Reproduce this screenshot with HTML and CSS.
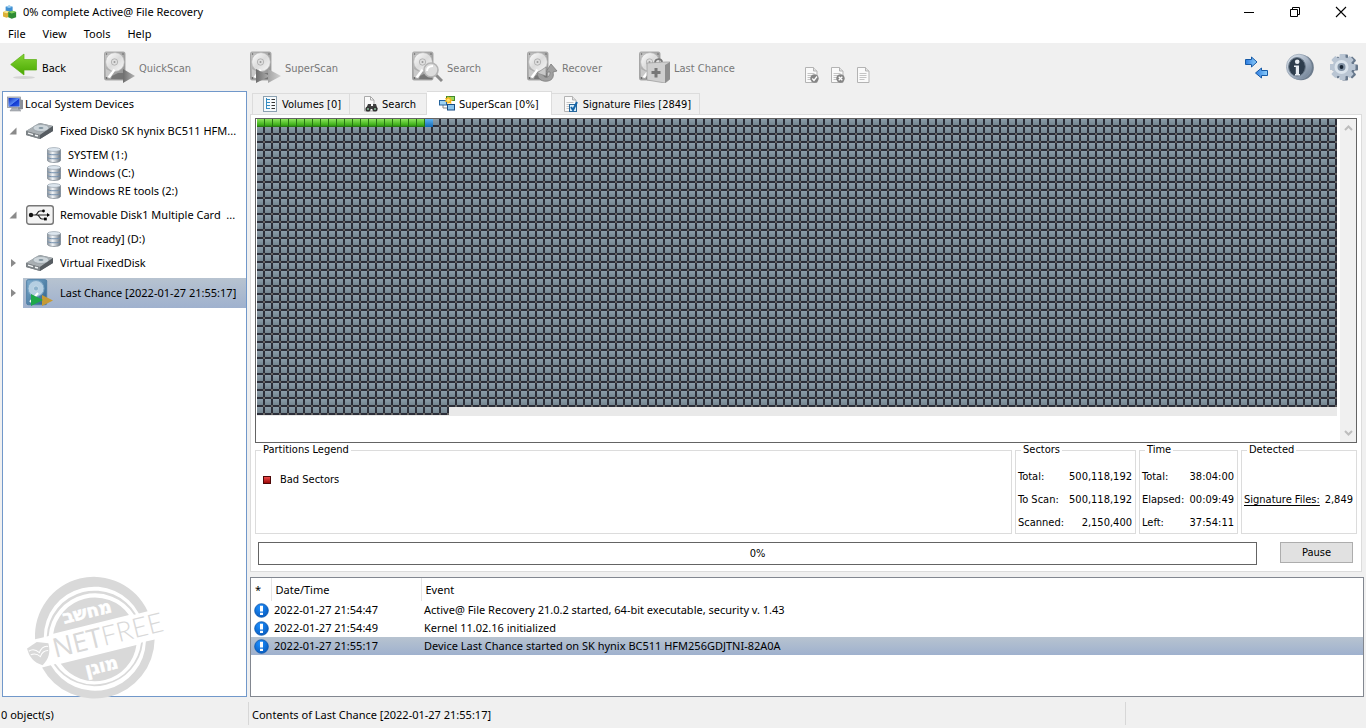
FILE: index.html
```html
<!DOCTYPE html>
<html lang="en">
<head>
<meta charset="utf-8">
<meta name="viewport" content="width=device-width, initial-scale=1">
<title>0% complete Active@ File Recovery</title>
<link rel="stylesheet" href="styles.css">
</head>
<body>
<svg class="defs" width="0" height="0" aria-hidden="true">
  <defs>
    <linearGradient id="gCase" x1="0" y1="0" x2="1" y2="1"><stop offset="0" stop-color="#c4c4c4"/><stop offset="1" stop-color="#8e8e8e"/></linearGradient>
    <linearGradient id="gPlate" x1="0" y1="0" x2="1" y2="1"><stop offset="0" stop-color="#ffffff"/><stop offset=".5" stop-color="#dcdcdc"/><stop offset="1" stop-color="#f8f8f8"/></linearGradient>
    <linearGradient id="gPlay" x1="0" y1="0" x2="1" y2="0"><stop offset="0" stop-color="#6e6e6e"/><stop offset="1" stop-color="#b4b4b4"/></linearGradient>
    <linearGradient id="gPlay2" x1="0" y1="0" x2="1" y2="0"><stop offset="0" stop-color="#a4a4a4"/><stop offset="1" stop-color="#d2d2d2"/></linearGradient>
    <linearGradient id="gBack" x1="0" y1="0" x2="0" y2="1"><stop offset="0" stop-color="#84d434"/><stop offset="1" stop-color="#48a800"/></linearGradient>
    <linearGradient id="gCyl" x1="0" y1="0" x2="1" y2="0"><stop offset="0" stop-color="#8a939c"/><stop offset=".4" stop-color="#f4f7fa"/><stop offset="1" stop-color="#69747f"/></linearGradient>
    <linearGradient id="gScreen" x1="0" y1="0" x2="1" y2="1"><stop offset="0" stop-color="#0b2cc0"/><stop offset=".5" stop-color="#5688f4"/><stop offset=".55" stop-color="#1238d0"/><stop offset="1" stop-color="#2c62ea"/></linearGradient>
    <linearGradient id="gArrow" x1="0" y1="0" x2="1" y2="0"><stop offset="0" stop-color="#2c7be0"/><stop offset="1" stop-color="#8fd0fb"/></linearGradient>
    <linearGradient id="gSteel" x1="0" y1="0" x2="1" y2="1"><stop offset="0" stop-color="#e4ebf3"/><stop offset=".5" stop-color="#a9b6c6"/><stop offset="1" stop-color="#63758a"/></linearGradient>
    <radialGradient id="gInfo" cx=".4" cy=".3" r=".8"><stop offset="0" stop-color="#1e90ff"/><stop offset="1" stop-color="#0656b8"/></radialGradient>
    <linearGradient id="gBlueCase" x1="0" y1="0" x2="1" y2="1"><stop offset="0" stop-color="#7faed0"/><stop offset="1" stop-color="#2d5f88"/></linearGradient>
    <symbol id="hdd" viewBox="0 0 32 32">
      <rect x="1.500" y="1" width="20.500" height="28" rx="1.500" fill="url(#gCase)" stroke="#9a9a9a" stroke-width=".8"/>
      <circle cx="12" cy="11" r="9.400" fill="url(#gPlate)" stroke="#adadad" stroke-width=".6"/>
      <circle cx="11.500" cy="11" r="3.200" fill="#dedede" stroke="#aaa" stroke-width=".8"/><circle cx="11.500" cy="11" r="1" fill="#999"/>
      <path d="M3 18l6 3-2 6H3z" fill="#c9c9c9"/><path d="M4.500 26l6-8 2 1.300L7 27z" fill="#fff"/>
      <path d="M9 25l6-3 6 0v6H8z" fill="#6a6a6a" opacity=".75"/>
      <g fill="#666"><circle cx="3.500" cy="3" r=".8"/><circle cx="20" cy="3" r=".8"/><circle cx="3.500" cy="27" r=".9"/></g>
    </symbol>
    <symbol id="drive" viewBox="0 0 28 18">
      <path d="M0 9L14 1l13 3v5L14 17 0 13z" fill="#777d82"/><path d="M0 9L13 1l14 3-13 9z" fill="#a9afb3"/>
      <ellipse cx="15" cy="6" rx="8" ry="3.500" fill="#cdd5da" stroke="#8e989f" stroke-width=".6"/><ellipse cx="15" cy="6" rx="2.500" ry="1.100" fill="#8295a0"/>
      <path d="M0 9l14 4v4L0 13z" fill="#7c8286"/><path d="M2 11.200l5 1.400M9 13.200l3 .8" stroke="#f4f6f7" stroke-width="1.400"/><path d="M14 13l13-9v5l-13 8z" fill="#565c61"/>
    </symbol>
    <symbol id="volume" viewBox="0 0 16 16">
      <path d="M1.500 2.500v11c0 1 3 2 6.500 2s6.500-1 6.500-2v-11z" fill="url(#gCyl)" stroke="#7a848e" stroke-width=".7"/>
      <ellipse cx="8" cy="2.500" rx="6.500" ry="1.900" fill="#dde6ee" stroke="#96a2ad" stroke-width=".7"/>
      <path d="M1.500 6.500c1 1.700 12 1.700 13 0M1.500 10.500c1 1.700 12 1.700 13 0" fill="none" stroke="#7591ae" stroke-width="1"/>
    </symbol>
    <symbol id="page" viewBox="0 0 14 16"><path d="M1.500.5h8l3.500 3.500v11.500h-11.500z" fill="#fafafa" stroke="#b3b3b3"/><path d="M9.500.5V4H13" fill="#e2e2e2" stroke="#b3b3b3"/><path d="M3.500 6.500h7M3.500 8.500h7M3.500 10.500h7M3.500 12.500h5" stroke="#c4c4c4"/></symbol>
    <symbol id="alert" viewBox="0 0 16 16"><circle cx="8" cy="8" r="7.300" fill="url(#gInfo)" stroke="#0a55ad" stroke-width=".8"/><path d="M6.400 3h3.200v6H6.400zM6.400 10.400h3.200v2.400H6.400z" fill="#fff"/></symbol>
    <g id="cog">
      <circle cx="12.500" cy="14" r="10"/>
      <rect x="9.500" y="1" width="6" height="26" rx="1"/><rect x="9.500" y="1" width="6" height="26" rx="1" transform="rotate(45 12.500 14)"/><rect x="9.500" y="1" width="6" height="26" rx="1" transform="rotate(90 12.500 14)"/><rect x="9.500" y="1" width="6" height="26" rx="1" transform="rotate(135 12.500 14)"/>
    </g>
  </defs>
</svg>

<header class="titlebar">
  <svg class="app-icon" viewBox="0 0 16 16"><path d="M3 2l4-1.500 4 1.500v5l-4 1.500L3 7z" fill="#3f8fd2"/><path d="M3 2l4-1.500L11 2 7 3.500z" fill="#9fd0f2"/><path d="M0 8l4-1.500L8 8v5l-4 1.500L0 13z" fill="#ddb238"/><path d="M0 8l4-1.500L8 8 4 9.500z" fill="#f9e793"/><path d="M6 8l5-1.500L15 8v6l-5 1.800L6 14z" fill="#2f8b34"/><path d="M6 8l5-1.500L15 8l-5 1.800z" fill="#83d15c"/></svg>
  <h1>0% complete Active@ File Recovery</h1>
  <div class="window-buttons">
    <button type="button" aria-label="Minimize"><svg viewBox="0 0 12 12"><path d="M1 6.500h10" stroke="#000"/></svg></button>
    <button type="button" aria-label="Restore"><svg viewBox="0 0 12 12"><path d="M1.500 3.500h7v7h-7zM3.500 3.500v-2h7v7h-2" fill="none" stroke="#000"/></svg></button>
    <button type="button" aria-label="Close"><svg viewBox="0 0 12 12"><path d="M1 1l10 10M11 1L1 11" stroke="#000" stroke-width="1.100"/></svg></button>
  </div>
</header>
<nav class="menubar"><button type="button">File</button><button type="button">View</button><button type="button">Tools</button><button type="button">Help</button></nav>

<div class="toolbar">
  <div class="commands">
    <button type="button" class="back"><svg viewBox="0 0 28 28"><ellipse cx="14" cy="24.500" rx="11" ry="1.500" fill="#d5d5d5"/><path d="M.7 11.500L14 1v5.500h12.500v10.500H14v5z" fill="url(#gBack)" stroke="#59ad12" stroke-width=".7"/></svg><span>Back</span></button>
    <button type="button" disabled><svg viewBox="0 0 32 32"><use href="#hdd"/><path d="M20 18l12 7-12 7z" fill="url(#gPlay)"/></svg><span>QuickScan</span></button>
    <button type="button" disabled><svg viewBox="0 0 32 32"><use href="#hdd"/><path d="M7 18l14 7-14 7z" fill="url(#gPlay)"/><path d="M19 18l13 7-13 7z" fill="url(#gPlay2)"/></svg><span>SuperScan</span></button>
    <button type="button" disabled><svg viewBox="0 0 32 32"><use href="#hdd"/><path d="M25 24l6 6" stroke="#8a8a8a" stroke-width="3"/><circle cx="20" cy="19" r="7" fill="#dcdcdc" stroke="#b4b4b4" stroke-width="1.600"/><path d="M16 20c0-4 3-5 6-5" fill="none" stroke="#fff" stroke-width="2"/></svg><span>Search</span></button>
    <button type="button" disabled><svg viewBox="0 0 32 32"><use href="#hdd"/><path d="M11 22c1 7 6 9 11 8 5-1 6-5 5-9l4-1-6-7-5 8 4 0c0 4-2 6-5 5-2-1-3-3-1-5z" fill="#a0a0a0" stroke="#7b7b7b" stroke-width=".8"/><path d="M11 22l9-6v9z" fill="#c9c9c9" stroke="#8b8b8b" stroke-width=".7"/></svg><span>Recover</span></button>
    <button type="button" disabled><svg viewBox="0 0 32 32"><use href="#hdd"/><path d="M17 12c0-5 7-5 7-1" fill="none" stroke="#777" stroke-width="1.800"/><path d="M9 12l19-1 4 0v17l-5 4-18-3z" fill="#cfcfcf" stroke="#9a9a9a" stroke-width=".7"/><path d="M27 14l5-3v17l-5 4z" fill="#8e8e8e"/><path d="M16.500 17h3v3h3v3h-3v3.500h-3v-3.500h-3v-3h3z" fill="#777"/></svg><span>Last Chance</span></button>
  </div>
  <div class="page-tools">
    <button type="button" disabled aria-label="Check files"><svg viewBox="0 0 16 16"><use href="#page" width="14" height="16"/><circle cx="10.500" cy="11.500" r="4.200" fill="#858585"/><path d="M8.300 11.500l1.700 2 3-4" fill="none" stroke="#fff" stroke-width="1.300"/></svg></button>
    <button type="button" disabled aria-label="Uncheck files"><svg viewBox="0 0 16 16"><use href="#page" width="14" height="16"/><circle cx="10.500" cy="11.500" r="4.200" fill="#858585"/><path d="M8.700 9.700l3.600 3.600M12.300 9.700l-3.600 3.600" stroke="#fff" stroke-width="1.300"/></svg></button>
    <button type="button" disabled aria-label="File details"><svg viewBox="0 0 16 16"><use href="#page" width="14" height="16"/></svg></button>
  </div>
  <div class="app-tools">
    <button type="button" aria-label="Toggle panes"><svg viewBox="0 0 28 28"><path d="M3.500 6.500h6V4l5.500 5-5.500 5V11.500h-6z" fill="url(#gArrow)" stroke="#175aa6"/><path d="M25.500 17.500h-6V15l-6 5 6 5v-2.500h6z" fill="url(#gArrow)" stroke="#175aa6"/></svg></button>
    <button type="button" aria-label="About"><svg viewBox="0 0 28 28"><circle cx="15" cy="14.500" r="12.800" fill="#6d7c8d"/><circle cx="13" cy="13.800" r="12.600" fill="url(#gSteel)" stroke="#8c9aab" stroke-width=".6"/><ellipse cx="11" cy="13.800" rx="8.400" ry="9.300" fill="#2e3d4d" stroke="#6c7b8b"/><circle cx="11.200" cy="8.800" r="2.300" fill="#e8edf3"/><path d="M8 12.500h5v8.500h1v1.500H9V21h.8v-7H8z" fill="#e8edf3"/></svg></button>
    <button type="button" aria-label="Settings"><svg viewBox="0 0 28 28"><g transform="translate(2.500 .5)" fill="#66778b"><use href="#cog"/></g><g fill="#b9c5d3"><use href="#cog"/></g><circle cx="11.500" cy="14" r="7" fill="#dbe4ed"/><circle cx="11.500" cy="14" r="4" fill="#7f90a3"/><circle cx="11.500" cy="14" r="1.900" fill="#172534"/></svg></button>
  </div>
</div>

<main class="workspace">
  <aside class="devices">
    <div class="root-row"><svg viewBox="0 0 16 16"><path d="M11 3l5 1v9l-5 1z" fill="#8a8f98"/><rect x=".5" y="1" width="13" height="10.500" fill="#c6cad0" stroke="#858990" stroke-width=".7"/><rect x="1.500" y="2" width="11" height="8.500" fill="url(#gScreen)"/><path d="M5 12h5l4 3H3z" fill="#aeb2b8" stroke="#858990" stroke-width=".5"/></svg>Local System Devices</div>
    <ul class="tree">
      <li class="disk"><svg class="twisty" viewBox="0 0 8 8"><path d="M7.500.5v7h-7z" fill="#8a8a8a"/></svg><span class="entry"><svg class="disk-icon" viewBox="0 0 28 18"><use href="#drive"/></svg><span class="name">Fixed Disk0 SK hynix BC511 HFM...</span></span></li>
      <li class="volume"><svg viewBox="0 0 16 16"><use href="#volume"/></svg>SYSTEM (1:)</li>
      <li class="volume"><svg viewBox="0 0 16 16"><use href="#volume"/></svg>Windows (C:)</li>
      <li class="volume"><svg viewBox="0 0 16 16"><use href="#volume"/></svg>Windows RE tools (2:)</li>
      <li class="disk"><svg class="twisty" viewBox="0 0 8 8"><path d="M7.500.5v7h-7z" fill="#8a8a8a"/></svg><span class="entry"><svg class="disk-icon" viewBox="0 0 28 20"><rect x=".7" y=".7" width="26.600" height="18.600" rx="2.500" fill="#f3f3f3" stroke="#777" stroke-width="1.400"/><path d="M5 10h17M9 10c3 0 2-4 5-4h3M11 10c3 0 2 4 5 4h3" fill="none" stroke="#222" stroke-width="1.200"/><circle cx="5" cy="10" r="2.200" fill="#111"/><path d="M21 8l3 2-3 2z"/><circle cx="17.500" cy="6" r="1.400"/><path d="M18 12.600h2.800v2.800H18z"/></svg><span class="name">Removable Disk1 Multiple Card &nbsp;...</span></span></li>
      <li class="volume"><svg viewBox="0 0 16 16"><use href="#volume"/></svg>[not ready] (D:)</li>
      <li class="disk"><svg class="twisty" viewBox="0 0 8 8"><path d="M2 0l5 4-5 4z" fill="#8a8a8a"/></svg><span class="entry"><svg class="disk-icon" viewBox="0 0 28 18"><use href="#drive"/></svg><span class="name">Virtual FixedDisk</span></span></li>
      <li class="disk"><svg class="twisty" viewBox="0 0 8 8"><path d="M2 0l5 4-5 4z" fill="#8a8a8a"/></svg><span class="entry selected"><svg class="scan-icon" viewBox="0 0 28 28"><rect x=".7" y=".7" width="20" height="25" rx="1.500" fill="url(#gBlueCase)" stroke="#4d7ea5"/><circle cx="10" cy="9.500" r="8" fill="#b5cfe2" stroke="#7ba6c6"/><circle cx="10" cy="9.500" r="2.500" fill="#8db2cc" stroke="#d5e5ef" stroke-width=".6"/><path d="M4 23l8-9" stroke="#fff" stroke-width="2"/><path d="M16 16l11 5.500L16 27z" fill="#c59a35"/><path d="M5 15l12 6-12 6z" fill="#1fa84a"/></svg><span class="name">Last Chance [2022-01-27 21:55:17]</span></span></li>
    </ul>
    <svg class="watermark" viewBox="0 0 144 120" role="img" aria-label="NetFree">
      <g transform="rotate(-14 70 60)" fill="#d9d9d9">
        <path d="M12 49A59 59 0 0 1 128 49L119 49A50.500 50.500 0 0 0 21 49z"/><path d="M12 78A60 60 0 0 0 128 78L119 78A51 51 0 0 1 21 78z"/>
        <path d="M24 49A48 48 0 0 1 116 49L114 49A46.500 46.500 0 0 0 26 49z"/>
        <path d="M24 78A49 49 0 0 0 116 78L114 78A47 47 0 0 1 26 78z"/>
        <path d="M31 48A42 42 0 0 1 109 48z"/><path d="M31 79A42 42 0 0 0 109 79z"/>
        <text class="hebrew" x="69" y="41">מחשב</text><text class="hebrew" x="70" y="97">מוגן</text>
        <path d="M2 56l11-4 11 4c0 9-3 15-11 20-8-5-11-11-11-20z"/><path d="M3 59c5-2 8 1 10 4 2-3 5-6 10-4M4 63c5-1 7 1 9 4 2-3 5-5 9-4" fill="none" stroke="#fff"/>
        <text class="net" x="27" y="72">NET<tspan class="free">FREE</tspan></text>
      </g>
    </svg>
  </aside>

  <section class="content">
    <div class="scan">
      <div class="tabs" role="tablist">
        <button type="button" role="tab" class="tab"><svg viewBox="0 0 16 16"><rect x="1.500" y=".5" width="13" height="15" fill="#f7fafc" stroke="#8ba0b0"/><path d="M4.500 2v11M4.500 3.500H8M4.500 6.500H8M4.500 9.500H8M4.500 12.500H8" fill="none" stroke="#348cc2"/><path d="M9.500 3.500H13M9.500 6.500H13M9.500 9.500H13M9.500 12.500H13" stroke="#333"/></svg><span>Volumes [0]</span></button>
        <button type="button" role="tab" class="tab search-tab"><svg viewBox="0 0 16 16"><path d="M2.500.5h6L12 4v11H2.500z" fill="#fafafa" stroke="#aaa"/><path d="M8.500.5V4H12" fill="none" stroke="#aaa"/><path d="M4 13l2-5h3v2h2V8h3l1.500 5z" fill="#404040"/><circle cx="6" cy="13" r="2.600" fill="#333"/><circle cx="13" cy="13" r="2.600" fill="#333"/><circle cx="6" cy="13" r="1" fill="#8b9"/><circle cx="13" cy="13" r="1" fill="#8b9"/></svg><span>Search</span></button>
        <button type="button" role="tab" class="tab active" aria-selected="true"><svg viewBox="0 0 16 16"><rect x="7.500" y=".5" width="8" height="4" fill="#9bdb5b" stroke="#438929"/><path d="M4 7v5h4" fill="none" stroke="#888"/><rect x=".5" y="4.500" width="7" height="4.500" fill="#9dd2f3" stroke="#25639d"/><rect x="8.500" y="8.500" width="7" height="5.500" fill="#8bc4ed" stroke="#174b83"/><path d="M9 0l1 2 2-1-.5 2.300L14 4l-2 1.500L12.500 8 10 7 8.500 8 8 6 5.500 5.500 7 4 6 2l2 .3z" fill="#fab41b"/><circle cx="9.300" cy="4.200" r="1.600" fill="#ffe66b"/></svg><span>SuperScan [0%]</span></button>
        <button type="button" role="tab" class="tab"><svg viewBox="0 0 16 16"><use href="#page" width="14" height="16"/><rect x="6.500" y="8.500" width="7" height="7" fill="#d7edf9" stroke="#28679b"/><path d="M8 11l2 3 4-8" fill="none" stroke="#1464a8" stroke-width="2"/></svg><span>Signature Files [2849]</span></button>
      </div>
      <div class="panel">
        <div class="map">
          <div class="cells">
            <div class="run"><span class="done"></span><span class="current"></span></div>
            <div class="tail"><span class="rest"></span></div>
          </div>
          <div class="scrollbar"><svg viewBox="0 0 9 6"><path d="M1 5l3.500-3.500L8 5" fill="none" stroke="#bdbdbd" stroke-width="2"/></svg><svg viewBox="0 0 9 6"><path d="M1 1l3.500 3.500L8 1" fill="none" stroke="#bdbdbd" stroke-width="2"/></svg></div>
        </div>
        <div class="groups">
          <fieldset class="legend-group"><legend>Partitions Legend</legend><div class="bad"><i></i>Bad Sectors</div></fieldset>
          <fieldset><legend>Sectors</legend><dl><dt>Total:</dt><dd>500,118,192</dd><dt>To Scan:</dt><dd>500,118,192</dd><dt>Scanned:</dt><dd>2,150,400</dd></dl></fieldset>
          <fieldset><legend>Time</legend><dl><dt>Total:</dt><dd>38:04:00</dd><dt>Elapsed:</dt><dd>00:09:49</dd><dt>Left:</dt><dd>37:54:11</dd></dl></fieldset>
          <fieldset><legend>Detected</legend><dl class="detected"><dt><a href="#">Signature Files:</a></dt><dd>2,849</dd></dl></fieldset>
        </div>
        <div class="progress-row"><div class="progress" role="progressbar" aria-valuenow="0" aria-valuemin="0" aria-valuemax="100">0%</div><button type="button" class="pause">Pause</button></div>
      </div>
    </div>
    <div class="log">
      <table>
        <colgroup><col class="c-mark"><col class="c-date"><col></colgroup>
        <thead><tr><th>*</th><th>Date/Time</th><th>Event</th></tr></thead>
        <tbody>
          <tr><td><svg viewBox="0 0 16 16"><use href="#alert"/></svg></td><td>2022-01-27 21:54:47</td><td>Active@ File Recovery 21.0.2 started, 64-bit executable, security v. 1.43</td></tr>
          <tr><td><svg viewBox="0 0 16 16"><use href="#alert"/></svg></td><td>2022-01-27 21:54:49</td><td>Kernel 11.02.16 initialized</td></tr>
          <tr class="selected"><td><svg viewBox="0 0 16 16"><use href="#alert"/></svg></td><td>2022-01-27 21:55:17</td><td>Device Last Chance started on SK hynix BC511 HFM256GDJTNI-82A0A</td></tr>
        </tbody>
      </table>
    </div>
  </section>
</main>
<footer class="statusbar"><span>0 object(s)</span><span>Contents of Last Chance [2022-01-27 21:55:17]</span><span></span></footer>
</body>
</html>
```
FILE: styles.css
```css
* { box-sizing: border-box; }
html { height: 100%; }
body {
  margin: 0;
  min-height: 100%;
  display: flex;
  flex-direction: column;
  background: #f0f0f0;
  color: #000;
  font: 11px/16px "Noto Sans", "Open Sans", sans-serif;
}
svg { flex: none; display: block; }
.defs { position: absolute; }
button { border: 0; padding: 0; background: none; font: inherit; color: inherit; }
ul, dl, dd { margin: 0; padding: 0; list-style: none; }

.titlebar { display: flex; align-items: center; height: 24px; padding: 0 2px 0 3px; background: #fff; }
.app-icon { width: 14px; height: 14px; margin-right: 6px; }
h1 { margin: 0; flex: 1; font-size: 11px; font-weight: 400; }
.window-buttons { display: flex; height: 20px; }
.window-buttons button { width: 46px; display: flex; align-items: center; justify-content: center; }
.window-buttons svg { width: 12px; height: 12px; }
.menubar { display: flex; gap: 17px; height: 19px; padding: 2px 0 0 8px; background: #fff; }
.menubar button { height: 16px; }

.toolbar, .tabs, .panel { font-family: "DejaVu Sans Condensed", "DejaVu Sans", sans-serif; }
.toolbar { display: flex; height: 48px; padding: 0 8px 0 10px; }
.commands { display: grid; grid-template-columns: 93px 146px 162px 115px 112px 166px; }
.commands button { display: flex; align-items: center; gap: 4px; text-align: left; }
.commands span { padding-top: 4px; }
.tab span { padding-top: 2px; }
.commands svg { width: 32px; height: 32px; }
.commands .back svg { width: 28px; height: 28px; }
button:disabled { color: #787878; }
.page-tools { display: flex; align-items: flex-end; gap: 10px; padding-bottom: 8px; }
.page-tools svg { width: 16px; height: 16px; }
.app-tools { display: flex; align-items: center; gap: 16px; margin-left: auto; }
.app-tools svg { width: 28px; height: 28px; }

.workspace { flex: 1; display: flex; gap: 3px; padding: 0 2px; }
.devices { position: relative; width: 245px; background: #fff; border: 1px solid #7198ca; }
.root-row { display: flex; align-items: center; gap: 2px; height: 24px; padding-left: 4px; }
.root-row svg { width: 16px; height: 16px; }
.tree li { display: flex; align-items: center; }
.tree .disk { height: 30px; padding-left: 6px; gap: 6px; }
.twisty { width: 8px; height: 8px; }
.entry { flex: 1; min-width: 0; height: 30px; display: flex; align-items: center; gap: 6px; padding: 0 2px 0 3px; }
.disk-icon { width: 28px; height: 20px; }
.scan-icon { width: 28px; height: 28px; }
.name { overflow: hidden; text-overflow: ellipsis; white-space: nowrap; }
.tree .volume { height: 18px; padding-left: 43px; gap: 6px; }
.volume svg { width: 16px; height: 16px; }
.selected { background: linear-gradient(#b7c3d0, #9fb1ce); }
.watermark { position: absolute; left: 21px; bottom: 0; width: 144px; height: 120px; overflow: visible; }
.hebrew { font: bold 18px "DejaVu Sans", sans-serif; fill: #fff; stroke: #fff; stroke-width: .6px; text-anchor: middle; }
.net { font: 27px "Open Sans", sans-serif; }
.free { font-family: Lato, sans-serif; font-weight: 300; }

.content { flex: 1; min-width: 0; display: flex; flex-direction: column; gap: 5px; }
.scan { flex: 1; display: flex; flex-direction: column; padding-right: 2px; }
.tabs { display: flex; align-items: flex-end; height: 23px; padding-left: 2px; }
.tab { display: flex; align-items: center; gap: 4px; height: 21px; padding: 0 8px 0 9px; border: 1px solid #dcdcdc; border-left-width: 0; border-bottom: 0; white-space: nowrap; }
.tab:first-child { border-left-width: 1px; }
.tab.search-tab { padding-left: 12px; padding-right: 10px; }
.tab.active { height: 24px; margin-bottom: -1px; padding: 0 12px; background: #fff; position: relative; }
.tab svg { width: 16px; height: 16px; }
.tab:last-child { padding-left: 11px; }
.panel { flex: 1; display: flex; flex-direction: column; padding: 3px 4px 4px; border: 1px solid #dcdcdc; background: #fff; }
.map { flex: 1; display: flex; border: 1px solid #646464; }
.cells { flex: 1; padding: 0 3px 0 1px; }
.run { height: 288px; display: flex; }
.run, .rest {
  background:
    conic-gradient(from 90deg at 6px 6px, #666462 0 25%, transparent 0) 0 0 / 8px 8px,
    linear-gradient(90deg, transparent 6px, #2b2d38 6px) 0 0 / 8px 8px,
    linear-gradient(#8c9da9 0, #74858f 6px, #2b2d38 6px) 0 0 / 8px 8px;
}
.done, .current { height: 8px; }
.done { width: 168px; background: linear-gradient(90deg, transparent 7px, #267512 7px) 0 0 / 8px 8px, linear-gradient(#8ce65c, #3cae18 6px, #226b10); }
.current { width: 8px; background: linear-gradient(#5eb3f2, #1268b4); }
.tail { height: 9px; display: flex; background: #e9e9e9; }
.rest { width: 192px; height: 8px; }
.scrollbar { width: 16px; background: #f0f0f0; display: flex; flex-direction: column; justify-content: space-between; align-items: center; padding: 6px 0; }
.scrollbar svg { width: 9px; height: 6px; }

.groups { display: flex; gap: 3px; height: 91px; }
fieldset { min-width: 0; margin: 0; padding: 12px 3px 0 2px; border: 1px solid #dcdcdc; }
legend { padding: 0 2px; margin-left: 3px; line-height: 14px; }
.groups fieldset { width: 121px; }
.groups fieldset.legend-group { flex: 1; width: auto; }
.groups fieldset:nth-child(3) { width: 99px; }
.groups fieldset:nth-child(4) { width: 116px; }
.bad { display: flex; align-items: center; gap: 9px; padding: 3px 5px; }
.bad i { width: 8px; height: 8px; border: 1px solid #4d0808; background: linear-gradient(#f04c4c, #9b0707); }
dl { display: grid; grid-template-columns: auto 1fr; row-gap: 7px; white-space: nowrap; }
dd { text-align: right; }
dl.detected { padding-top: 23px; }
a { color: inherit; text-underline-offset: 2px; }
.progress-row { display: flex; gap: 23px; padding: 8px 4px 2px 3px; }
.progress { flex: 1; height: 23px; border: 1px solid #646464; display: flex; align-items: center; justify-content: center; }
.pause { width: 73px; height: 21px; border: 1px solid #adadad; background: #e1e1e1; }

.log { height: 120px; background: #fff; border: 1px solid #828790; overflow: hidden; }
table { width: 100%; table-layout: fixed; border-collapse: collapse; }
.c-mark { width: 20px; }
.c-date { width: 150px; }
th { height: 23px; padding: 0 4px; border-right: 1px solid #e5e5e5; font-weight: 400; text-align: left; }
th:last-child { border-right: 0; }
td { height: 18px; padding: 0 3px; line-height: 16px; white-space: nowrap; }
td svg { width: 15px; height: 15px; }

.statusbar { display: flex; height: 31px; padding: 5px 0 3px; line-height: 26px; }
.statusbar span { flex: 1; padding-left: 3px; border-left: 1px solid #d7d7d7; }
.statusbar span:first-child { flex: none; width: 248px; padding-left: 1px; border: 0; }
.statusbar span:last-child { flex: none; width: 241px; }
```
